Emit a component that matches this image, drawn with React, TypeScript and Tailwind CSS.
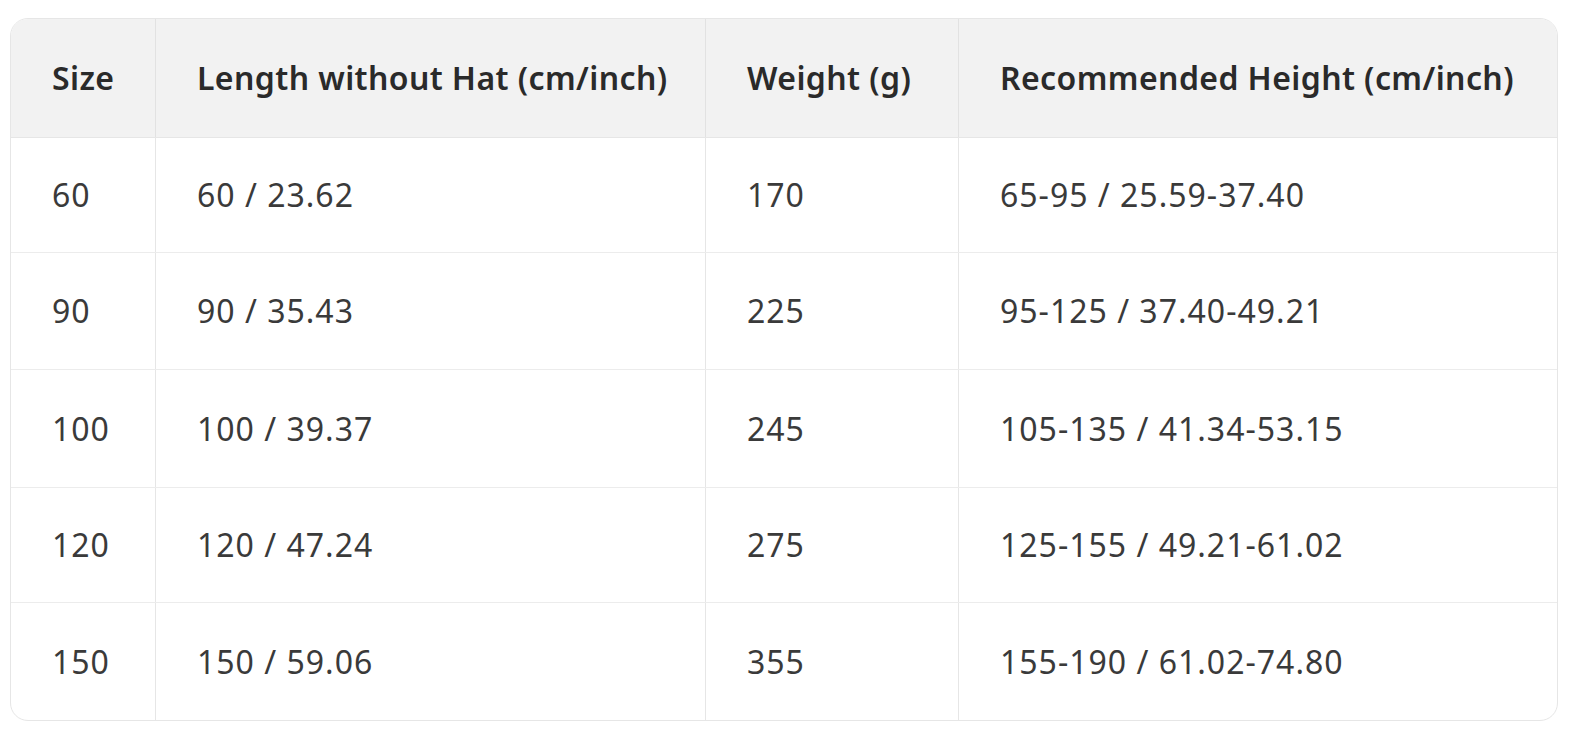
import React from "react";

const header = ["Size", "Length without Hat (cm/inch)", "Weight (g)", "Recommended Height (cm/inch)"];
const rows = [
  ["60", "60 / 23.62", "170", "65-95 / 25.59-37.40"],
  ["90", "90 / 35.43", "225", "95-125 / 37.40-49.21"],
  ["100", "100 / 39.37", "245", "105-135 / 41.34-53.15"],
  ["120", "120 / 47.24", "275", "125-155 / 49.21-61.02"],
  ["150", "150 / 59.06", "355", "155-190 / 61.02-74.80"],
];
const heights = ["h-[115px]", "h-[117px]", "h-[118px]", "h-[115px]", "h-[117px]"];

export default function App() {
  return (
    <div className="w-[1572px] h-[732px] bg-white pt-[18px] pl-[10px]" style={{ fontFamily: '"Noto Sans", "Open Sans", sans-serif' }}>
      <div className="w-[1548px] rounded-[18px] border border-[#e6e6e6] overflow-hidden">
        <div className="grid grid-cols-[145px_550px_253px_1fr] h-[119px] bg-[#f2f2f2] border-b border-[#e6e6e6]">
          {header.map((h, i) => (
            <div key={i} className={`flex items-center pl-[41px] text-[32px] tracking-[0.4px] font-semibold text-[#2a2a2a] ${i < 3 ? "border-r border-[#e2e2e2]" : ""}`}>
              {h}
            </div>
          ))}
        </div>
        {rows.map((r, ri) => (
          <div key={ri} className={`grid grid-cols-[145px_550px_253px_1fr] ${heights[ri]} ${ri < rows.length - 1 ? "border-b border-[#ececec]" : ""}`}>
            {r.map((c, i) => (
              <div key={i} className={`flex items-center pl-[41px] text-[32px] tracking-[1px] text-[#3a3a3a] ${i < 3 ? "border-r border-[#e6e6e6]" : ""}`}>
                {c}
              </div>
            ))}
          </div>
        ))}
      </div>
    </div>
  );
}
